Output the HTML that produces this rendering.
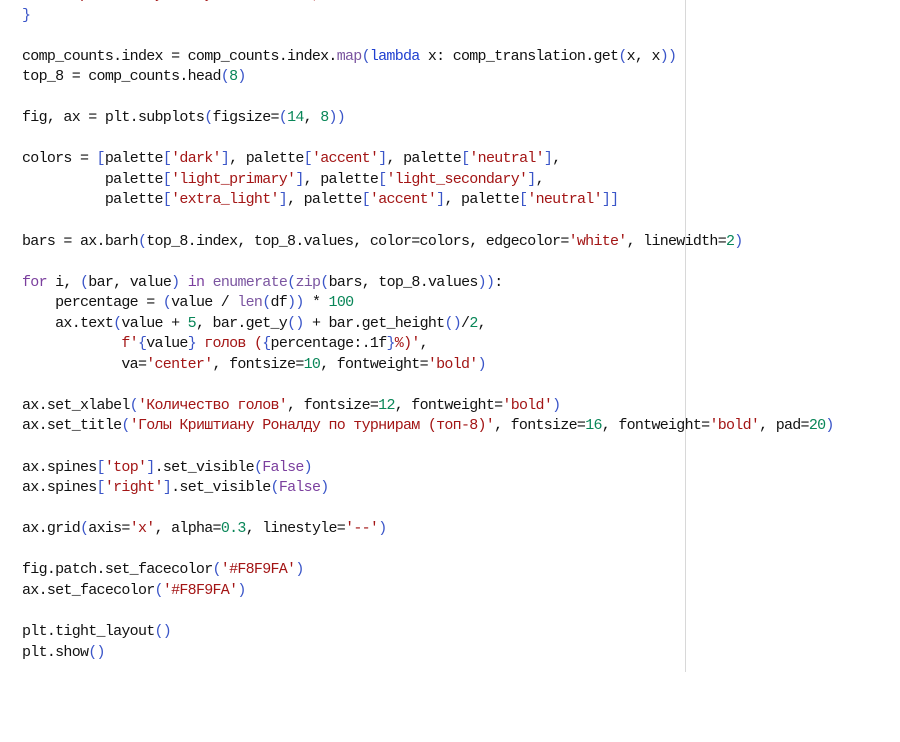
<!DOCTYPE html>
<html><head><meta charset="utf-8"><style>
html,body{margin:0;padding:0;background:#fff;width:900px;height:742px;overflow:hidden;position:relative}
pre{position:absolute;left:22px;top:-15px;margin:0;font-family:"Liberation Mono","DejaVu Sans Mono",monospace;font-size:15px;letter-spacing:-0.72px;line-height:20.55px;color:#111;white-space:pre}
.vl{position:absolute;left:685px;top:0;width:1px;height:672px;background:#d8d8d8}
.k{color:#7b3f9e}.l{color:#1f3fd0}.b{color:#7b55a0}.s{color:#a31515}.n{color:#098658}.p{color:#3a55c8}
</style></head><body>
<div class="vl"></div>
<pre>    <span class="s">'Copa del Rey': 'Кубок Испании',</span>
<span class="p">}</span>

comp_counts.index = comp_counts.index.<span class="b">map</span><span class="p">(</span><span class="l">lambda</span> x: comp_translation.get<span class="p">(</span>x, x<span class="p">))</span>
top_8 = comp_counts.head<span class="p">(</span><span class="n">8</span><span class="p">)</span>

fig, ax = plt.subplots<span class="p">(</span>figsize=<span class="p">(</span><span class="n">14</span>, <span class="n">8</span><span class="p">))</span>

colors = <span class="p">[</span>palette<span class="p">[</span><span class="s">'dark'</span><span class="p">]</span>, palette<span class="p">[</span><span class="s">'accent'</span><span class="p">]</span>, palette<span class="p">[</span><span class="s">'neutral'</span><span class="p">]</span>,
          palette<span class="p">[</span><span class="s">'light_primary'</span><span class="p">]</span>, palette<span class="p">[</span><span class="s">'light_secondary'</span><span class="p">]</span>,
          palette<span class="p">[</span><span class="s">'extra_light'</span><span class="p">]</span>, palette<span class="p">[</span><span class="s">'accent'</span><span class="p">]</span>, palette<span class="p">[</span><span class="s">'neutral'</span><span class="p">]]</span>

bars = ax.barh<span class="p">(</span>top_8.index, top_8.values, color=colors, edgecolor=<span class="s">'white'</span>, linewidth=<span class="n">2</span><span class="p">)</span>

<span class="k">for</span> i, <span class="p">(</span>bar, value<span class="p">)</span> <span class="k">in</span> <span class="b">enumerate</span><span class="p">(</span><span class="b">zip</span><span class="p">(</span>bars, top_8.values<span class="p">))</span>:
    percentage = <span class="p">(</span>value / <span class="b">len</span><span class="p">(</span>df<span class="p">))</span> * <span class="n">100</span>
    ax.text<span class="p">(</span>value + <span class="n">5</span>, bar.get_y<span class="p">()</span> + bar.get_height<span class="p">()</span>/<span class="n">2</span>,
            <span class="s">f'</span><span class="p">{</span>value<span class="p">}</span><span class="s"> голов (</span><span class="p">{</span>percentage:.1f<span class="p">}</span><span class="s">%)'</span>,
            va=<span class="s">'center'</span>, fontsize=<span class="n">10</span>, fontweight=<span class="s">'bold'</span><span class="p">)</span>

ax.set_xlabel<span class="p">(</span><span class="s">'Количество голов'</span>, fontsize=<span class="n">12</span>, fontweight=<span class="s">'bold'</span><span class="p">)</span>
ax.set_title<span class="p">(</span><span class="s">'Голы Криштиану Роналду по турнирам (топ-8)'</span>, fontsize=<span class="n">16</span>, fontweight=<span class="s">'bold'</span>, pad=<span class="n">20</span><span class="p">)</span>

ax.spines<span class="p">[</span><span class="s">'top'</span><span class="p">]</span>.set_visible<span class="p">(</span><span class="k">False</span><span class="p">)</span>
ax.spines<span class="p">[</span><span class="s">'right'</span><span class="p">]</span>.set_visible<span class="p">(</span><span class="k">False</span><span class="p">)</span>

ax.grid<span class="p">(</span>axis=<span class="s">'x'</span>, alpha=<span class="n">0.3</span>, linestyle=<span class="s">'--'</span><span class="p">)</span>

fig.patch.set_facecolor<span class="p">(</span><span class="s">'#F8F9FA'</span><span class="p">)</span>
ax.set_facecolor<span class="p">(</span><span class="s">'#F8F9FA'</span><span class="p">)</span>

plt.tight_layout<span class="p">()</span>
plt.show<span class="p">()</span></pre>
</body></html>
